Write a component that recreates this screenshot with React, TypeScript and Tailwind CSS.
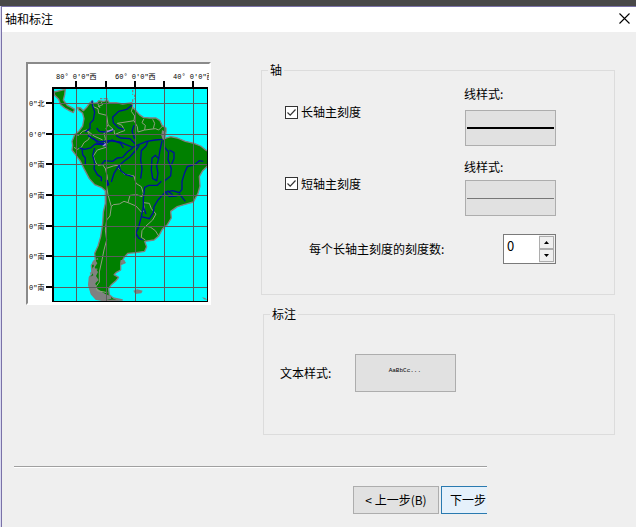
import { useState } from "react";
import type { ReactNode } from "react";

const MERIDIANS = [76, 106, 135, 164, 193];
const PARALLELS = [103, 134, 164, 195, 226, 256, 287];

const TOP_LABELS = [
	{ x: 56, text: "80° 0'0\"西" },
	{ x: 115, text: "60° 0'0\"西" },
	{ x: 173, text: "40° 0'0\"西" },
];

const LEFT_LABELS = ["0\"北", "0'0\"", "0\"南", "0\"南", "0\"南", "0\"南", "0\"南"];

// Shapes below are drawn at three units per pixel
const LAND = [
	"M90 96 L124 88 L122 104 L118 120 L130 136 L142 142 L152 148 L148 158 L136 152 L122 144 L110 134 L104 118 L92 106 Z",
	"M160 142 L170 144 L178 152 L188 142 L196 130 L206 122 L208 130 L220 128 L224 122 L240 124 L250 120 L256 128 L276 128 L296 132 L324 128 L326 142 L336 152 L346 164 L358 172 L376 174 L396 174 L408 182 L414 196 L426 204 L426 216 L420 236 L440 230 L460 234 L484 244 L510 250 L530 258 L548 272 L560 274 L560 312 L548 320 L536 332 L526 350 L528 378 L522 400 L508 426 L480 434 L460 440 L440 454 L442 474 L430 494 L416 506 L404 528 L390 540 L362 544 L368 560 L362 574 L336 578 L312 580 L302 590 L296 600 L304 608 L290 614 L290 630 L276 638 L270 644 L284 652 L276 662 L262 674 L254 686 L256 704 L268 714 L296 720 L240 722 L216 718 L202 702 L194 676 L196 652 L204 640 L202 616 L214 600 L212 580 L222 558 L230 530 L236 490 L238 456 L244 430 L244 392 L232 382 L212 374 L196 356 L180 326 L168 302 L156 286 L144 270 L146 256 L144 244 L152 224 L166 212 L176 198 L180 176 L176 160 L164 150 Z",
];

const BORDERS = [
	"M204 124 L208 140 L222 146 L224 160 L248 166 L252 194 L246 206 L250 214 L240 218 L244 236 L240 256 L246 262 L220 270 L208 288 L214 306 L222 316 L236 314 L244 326",
	"M150 222 L164 226 L176 214 L188 210 L198 226 L194 238 L180 248 L172 262 L160 268 L150 262",
	"M188 210 L210 228 L236 240 M252 194 L270 210 L272 224 L290 216 L302 212 L294 196 L280 190 L318 184 L330 182 L332 168 L322 154 L326 142",
	"M330 182 L340 200 L342 216 L362 210 L364 196 L354 188 L360 176",
	"M362 210 L394 206 L404 210 L416 198",
	"M388 206 L392 190 L386 178",
	"M244 326 L268 318 L290 314 L284 326 L300 342 L330 348 L336 370 L352 380 L358 400 L354 410 L338 404 L318 406 L312 428 L300 424 L286 432 L268 434 L262 440 L252 404 L248 380 L250 350 L244 326",
	"M312 428 L336 438 L352 456 L362 452 L358 428 L376 430 L382 446 L396 462 L386 480 L366 498 L354 512 L352 532 L364 540",
	"M366 498 L380 502 L394 512 L404 528",
	"M262 440 L258 468 L248 480 L244 510 L248 540 L240 570 L234 600 L226 636 L226 666 L216 680 L220 692 L250 698",
	"M220 128 L228 144 M222 140 L236 134 L232 126",
];

const RIVERS = [
	"M204 122 L206 138 L212 156 L208 180 L198 190 L198 206 L184 216",
	"M324 136 L308 148 L284 154 L266 172 L268 188 L284 204 L300 208",
	"M218 204 L226 214 L240 216 L262 214 L270 206",
	"M192 226 L206 236 L228 246 L254 242 L288 246 L306 254 L326 262 L344 254 L368 244 L394 240 L416 238",
	"M208 234 L222 250 L246 250 L264 240 L290 250 L298 264",
	"M276 226 L290 234 L318 236 L334 252",
	"M330 196 L324 214 L332 236",
	"M166 264 L182 268 L200 264 L214 252 L236 254 L250 260",
	"M174 266 L176 284 L184 294 L184 312",
	"M212 264 L206 286 L212 310 L210 326 L220 344 L232 352 L232 364",
	"M232 314 L242 302 L266 304 L280 294 L296 292 L310 276 L326 264",
	"M262 366 L270 340 L284 318 L300 304 L318 290 L336 270 L346 256",
	"M284 316 L290 332 L306 344 L326 350",
	"M372 244 L366 258 L352 272 L350 300 L354 326 L350 356",
	"M414 242 L408 270 L404 296 L394 286 L384 294 L382 330 L386 356 L398 362 L402 340 L398 318 L404 296",
	"M420 240 L422 262 L434 276 L432 298 L442 326 L440 348 L422 362",
	"M436 270 L450 278 L450 296 L442 314",
	"M412 364 L400 376 L374 376 L362 382 L358 416 L358 440 L366 462",
	"M538 304 L526 302 L512 314 L490 320 L482 338 L474 364 L474 388 L466 398 L446 392 L424 396 L402 420 L390 440 L388 458 L376 476 L352 470",
	"M424 396 L436 410 L456 408 L468 404 L484 424 M430 392 L446 404",
	"M358 440 L352 470 L344 500 L336 518 L334 534 M336 520 L344 534 L356 540",
	"M244 364 L250 362 L254 374 L250 376 L248 366",
];

const ISLANDS = [
	"M214 600 L220 610 L212 622 L222 636 L216 648 L224 660 L214 670 L218 684 L230 694 L244 702 L260 708 L262 716 L240 722 L216 718 L202 702 L194 676 L196 652 L208 646 L202 630 L210 618 L204 606 Z",
	"M328 692 L340 688 L356 692 L352 700 L334 702 Z",
	"M534 712 L544 714 L550 720 L540 718 Z",
	"M414 210 L426 216 L424 236 L416 240 L412 226 Z",
	"M290 600 L302 600 L300 610 L288 612 Z",
];

function PreviewMap() {
	return (
		<svg
			viewBox="28 64 181 239"
			className="block h-[239px] w-[181px]"
			role="img"
			aria-label="预览"
		>
			<rect x="53" y="88" width="156" height="214" fill="#00ffff" />

			<g transform="translate(24 60) scale(0.33333)" fill="none">
				<g fill="#008000" stroke="#808080" strokeWidth="4" strokeLinejoin="bevel">
					{LAND.map((d) => (
						<path key={d} d={d} />
					))}
				</g>
				<g fill="#808080">
					{ISLANDS.map((d) => (
						<path key={d} d={d} />
					))}
				</g>
				<path
					d="M228 116 H252 M326 90 V104 M332 104 V118 M326 118 V136 M208 604 L222 596 M198 640 L210 634 M206 624 L220 628"
					stroke="#808080"
					strokeWidth="4"
					strokeDasharray="7 4"
				/>
				<g stroke="#90a080" strokeWidth="3">
					{BORDERS.map((d) => (
						<path key={d} d={d} />
					))}
				</g>
				<g stroke="#00109c" strokeWidth="4">
					{RIVERS.map((d) => (
						<path key={d} d={d} />
					))}
				</g>
				<path d="M240 254 L250 250 M246 216 L268 208 M236 258 L246 254" stroke="#9a8ad0" strokeWidth="4" />
			</g>

			{/* Graticule */}
			<g fill="#5c5c5c" shapeRendering="crispEdges">
				{MERIDIANS.map((x) => (
					<rect key={x} x={x} y="88" width="1" height="214" />
				))}
				{PARALLELS.map((y) => (
					<rect key={y} x="53" y={y} width="156" height="1" />
				))}
			</g>

			{/* Frame and ticks */}
			<g fill="#000000" shapeRendering="crispEdges">
				<rect x="52" y="87" width="156" height="2" />
				<rect x="52" y="87" width="2" height="215" />
				<rect x="207" y="87" width="1" height="215" />
				<rect x="52" y="301" width="156" height="1" />
				{MERIDIANS.map((x) => (
					<rect key={x} x={x - 1} y="81" width="2" height="7" />
				))}
				{PARALLELS.map((y) => (
					<rect key={y} x="46" y={y - 1} width="7" height="2" />
				))}
			</g>
			<rect x="208" y="80" width="1" height="223" fill="#ffffff" />

			<g className="font-['Liberation_Mono','Noto_Sans_CJK_SC',monospace] text-[7px]">
				{TOP_LABELS.map((label) => (
					<text key={label.x} x={label.x} y="79" xmlSpace="preserve">
						{label.text}
					</text>
				))}
				{LEFT_LABELS.map((text, i) => (
					<text key={PARALLELS[i]} x="29" y={PARALLELS[i] + 3}>
						{text}
					</text>
				))}
			</g>
		</svg>
	);
}

interface TickCheckboxProps {
	id: string;
	label: string;
}

function TickCheckbox({ id, label }: TickCheckboxProps) {
	return (
		<div className="flex items-center gap-[3px] pb-2">
			<span className="relative block size-[13px]">
				<input
					id={id}
					type="checkbox"
					defaultChecked
					className="peer block size-[13px] appearance-none border border-[#333333] bg-white"
				/>
				<svg
					viewBox="0 0 13 13"
					className="pointer-events-none absolute inset-0 hidden size-[13px] peer-checked:block"
				>
					<path d="M2.5 6.5 L5.2 9.2 L10.5 3.5" fill="none" stroke="#333333" strokeWidth="1.2" />
				</svg>
			</span>
			<label htmlFor={id}>{label}</label>
		</div>
	);
}

interface LineStyleProps {
	name: string;
	className: string;
	children: ReactNode;
}

function LineStyle({ name, className, children }: LineStyleProps) {
	return (
		<div className={`flex w-[92px] flex-col ${className}`}>
			<span>线样式:</span>
			<button
				type="button"
				aria-label={name}
				className="ml-px flex h-9 items-center border border-[#adadad] bg-[#e1e1e1] px-px"
			>
				{children}
			</button>
		</div>
	);
}

function Spinner() {
	const [value, setValue] = useState(0);

	return (
		<div className="flex h-[30px] w-[53px] border border-[#7a7a7a] bg-white">
			<input
				id="tick-count"
				type="text"
				value={value}
				onChange={(e) => setValue(Number(e.target.value) || 0)}
				className="h-5 w-[35px] pl-[3px] text-[13px] leading-4 outline-none"
			/>
			<div className="flex w-4 flex-col bg-[#f0f0f0] py-px pr-px">
				<button
					type="button"
					aria-label="增加"
					onClick={() => setValue(value + 1)}
					className="flex flex-1 items-center justify-center border border-[#adadad] bg-[#f0f0f0]"
				>
					<svg viewBox="0 0 5 3" className="h-[3px] w-[5px]">
						<path d="M0 3 L2.5 0 L5 3 Z" />
					</svg>
				</button>
				<button
					type="button"
					aria-label="减少"
					onClick={() => setValue(Math.max(0, value - 1))}
					className="flex flex-1 items-center justify-center border border-[#adadad] bg-[#f0f0f0]"
				>
					<svg viewBox="0 0 5 3" className="h-[3px] w-[5px]">
						<path d="M0 0 L2.5 3 L5 0 Z" />
					</svg>
				</button>
			</div>
		</div>
	);
}

export default function App() {
	return (
		<div className="flex min-h-screen flex-col bg-[#efefef] font-['Noto_Sans_CJK_SC',sans-serif] text-[12px] leading-4 text-black">
			<div className="h-1.5 bg-[#484848]" />
			<div className="flex flex-1 border-l border-[#d9d9f0]">
				<div className="flex flex-1 flex-col border-t border-l border-[#7a72a8]">
					{/* Title bar */}
					<header className="flex h-[25px] items-center justify-between bg-white pr-1.5 pb-0.5 pl-[3px]">
						<h1>轴和标注</h1>
						<button type="button" aria-label="关闭">
							<svg viewBox="0 0 11 11" className="size-[11px]">
								<path d="M0.5 0.5 L10.5 10.5 M10.5 0.5 L0.5 10.5" stroke="#000" strokeWidth="1.1" />
							</svg>
						</button>
					</header>

					<main className="flex items-start pt-[30px] pr-[21px] pl-6">
						<div className="shrink-0 border-2 border-t-[#8a8a8a] border-r-white border-b-white border-l-[#8a8a8a] bg-white">
							<PreviewMap />
						</div>

						<div className="ml-[50px] flex flex-1 flex-col gap-[11px]">
							<fieldset className="h-[233px] border border-[#dcdcdc] pr-[58px] pl-[23px]">
								<legend className="-ml-[17px] px-0.5">轴</legend>
								<div className="mt-2 flex items-center justify-between">
									<TickCheckbox id="major-ticks" label="长轴主刻度" />
									<LineStyle name="长轴线样式" className="gap-2">
										<span className="h-0.5 w-full bg-black" />
									</LineStyle>
								</div>
								<div className="mt-[13px] flex items-center justify-between">
									<TickCheckbox id="minor-ticks" label="短轴主刻度" />
									<LineStyle name="短轴线样式" className="gap-[5px]">
										<span className="h-px w-full bg-[#777777]" />
									</LineStyle>
								</div>
								<div className="mt-[18px] flex items-center justify-between pl-6">
									<label htmlFor="tick-count">每个长轴主刻度的刻度数:</label>
									<Spinner />
								</div>
							</fieldset>

							<fieldset className="ml-0.5 h-[129px] border border-[#dcdcdc] px-4">
								<legend className="-ml-2.5 px-0.5">标注</legend>
								<div className="mt-8 flex items-center gap-6">
									<span>文本样式:</span>
									<button
										type="button"
										className="h-[38px] w-[101px] border border-[#adadad] bg-[#e1e1e1] pr-0.5 pb-1 font-['Liberation_Mono',monospace] text-[6px]"
									>
										AaBbCc...
									</button>
								</div>
							</fieldset>
						</div>
					</main>

					<footer className="mt-[31px] mr-[149px] ml-3">
						<hr className="border-t border-b border-t-[#a0a0a0] border-b-white" />
						<div className="mt-[18px] flex justify-end gap-0.5">
							<button type="button" className="h-7 w-[86px] border border-[#adadad] bg-[#e1e1e1]">
								&lt; 上一步(B)
							</button>
							<button
								type="button"
								className="h-7 w-[46px] border border-r-0 border-[#2a7ab0] bg-[#e5f1fb] pl-2 text-left"
							>
								下一步
							</button>
						</div>
					</footer>
				</div>
			</div>
		</div>
	);
}
